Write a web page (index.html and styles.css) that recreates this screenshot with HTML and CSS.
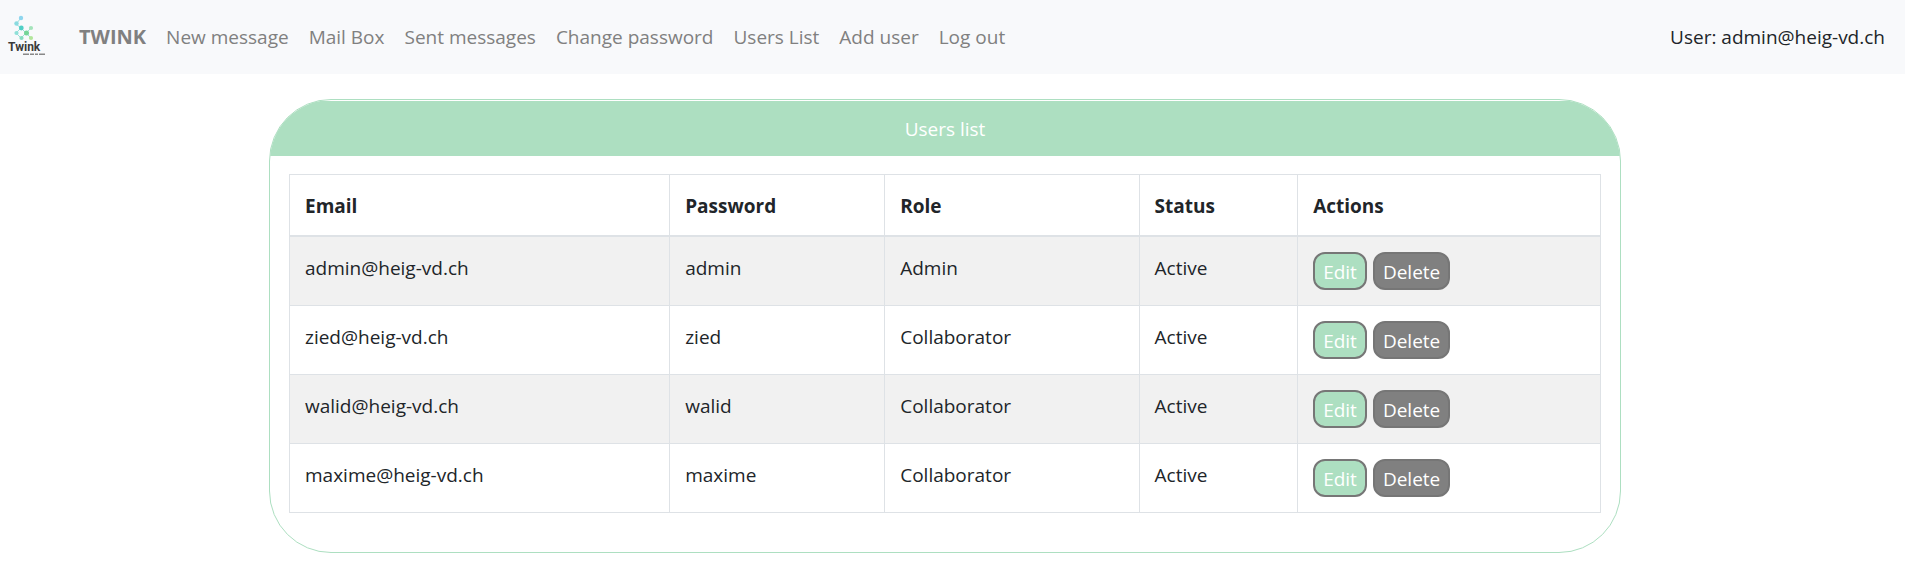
FILE: index.html
```html
<!DOCTYPE html>
<html lang="en">
<head>
<meta charset="utf-8">
<title>Twink - Users list</title>
<link rel="stylesheet" href="styles.css">
</head>
<body>
<header class="navbar">
  <svg class="logo" viewBox="0 0 44 54" role="img" aria-label="Twink">
    <path d="M14 8 9 14M9 14l5 4M9 23l5-5 5 5-5 5zM19 23l5-5M19 23l5 5" fill="none" stroke="#9adfd8" stroke-width="1"/>
    <g>
      <circle cx="14" cy="8" r="2.200" fill="#8fd6ee"/>
      <circle cx="9.500" cy="13.500" r="2.200" fill="#8adbe0"/>
      <circle cx="14.300" cy="18" r="2.400" fill="#50cfc6"/>
      <circle cx="24" cy="18" r="2.100" fill="#a5e4bb"/>
      <circle cx="9.500" cy="23" r="2.100" fill="#8fe0d8"/>
      <circle cx="19.500" cy="23" r="2.500" fill="#74d597"/>
      <circle cx="14.500" cy="28" r="2.100" fill="#85dcc0"/>
      <circle cx="24" cy="28" r="2.100" fill="#b2e69b"/>
    </g>
    <text class="logo-name" x="1" y="41">Twink</text>
    <path d="M16 44.300h23" stroke="#888" stroke-width="1.500" stroke-dasharray="6 1 4 1 3 1"/>
  </svg>
  <nav class="menu">
    <a class="brand" href="#">TWINK</a>
    <a href="#">New message</a>
    <a href="#">Mail Box</a>
    <a href="#">Sent messages</a>
    <a href="#">Change password</a>
    <a href="#">Users List</a>
    <a href="#">Add user</a>
    <a href="#">Log out</a>
  </nav>
  <span class="current-user">User: admin@heig-vd.ch</span>
</header>
<main class="card">
  <h1 class="card-title">Users list</h1>
  <div class="card-body">
    <table class="users">
      <colgroup><col class="c-email"><col class="c-password"><col class="c-role"><col class="c-status"><col></colgroup>
      <thead>
        <tr><th>Email</th><th>Password</th><th>Role</th><th>Status</th><th>Actions</th></tr>
      </thead>
      <tbody>
        <tr><td>admin@heig-vd.ch</td><td>admin</td><td>Admin</td><td>Active</td><td><div class="actions"><button class="edit" type="button">Edit</button><button class="delete" type="button">Delete</button></div></td></tr>
        <tr><td>zied@heig-vd.ch</td><td>zied</td><td>Collaborator</td><td>Active</td><td><div class="actions"><button class="edit" type="button">Edit</button><button class="delete" type="button">Delete</button></div></td></tr>
        <tr><td>walid@heig-vd.ch</td><td>walid</td><td>Collaborator</td><td>Active</td><td><div class="actions"><button class="edit" type="button">Edit</button><button class="delete" type="button">Delete</button></div></td></tr>
        <tr><td>maxime@heig-vd.ch</td><td>maxime</td><td>Collaborator</td><td>Active</td><td><div class="actions"><button class="edit" type="button">Edit</button><button class="delete" type="button">Delete</button></div></td></tr>
      </tbody>
    </table>
  </div>
</main>
</body>
</html>
```
FILE: styles.css
```css
* { box-sizing: border-box; }

body {
  margin: 0;
  background: #fff;
  color: #212529;
  font: 19px/30px "Open Sans", "Noto Sans", sans-serif;
}

.navbar {
  display: flex;
  align-items: center;
  padding: 10px 20px 10px 7px;
  background: #f8f9fb;
}

.logo {
  width: 44px;
  height: 54px;
  margin-right: 28px;
}

.logo-name {
  fill: #3a3a3a;
  font: bold 12px Roboto, sans-serif;
}

.menu {
  display: flex;
  flex: 1;
  gap: 20px;
}

.menu a {
  color: #808080;
  text-decoration: none;
  white-space: nowrap;
}

.menu .brand {
  font-size: 20px;
  font-weight: 700;
}

.card {
  margin: 25px 284px 16px 269px;
  padding-top: 1px;
  border: 1px solid #addfc1;
  border-radius: 62px;
  overflow: hidden;
}

.card-title {
  margin: 0;
  padding: 13px 20px 12px;
  background: #addfc1;
  color: #fff;
  font-size: 19px;
  font-weight: 400;
  text-align: center;
}

.card-body { padding: 18px 19px 39px; }

.users {
  width: 100%;
  border-collapse: collapse;
  table-layout: fixed;
}

.c-email { width: 29%; }
.c-password { width: 16.4%; }
.c-role { width: 19.4%; }
.c-status { width: 12.1%; }

.users th,
.users td {
  padding: 15px;
  border: 1px solid #dee2e6;
  text-align: left;
  vertical-align: top;
}

.users th {
  padding: 16px 15px 14px;
  border-bottom-width: 2px;
}

.users td { line-height: 32px; }
.users tbody tr:nth-child(odd) { background: #f1f1f1; }

.actions {
  display: flex;
  gap: 6px;
}

.actions button {
  height: 38px;
  padding: 2px 8px 0;
  border: 2px solid #767676;
  border-radius: 12px;
  color: #fff;
  font: inherit;
  line-height: 30px;
}

.edit { background: #addfc1; }
.delete { background: #808080; }
```
